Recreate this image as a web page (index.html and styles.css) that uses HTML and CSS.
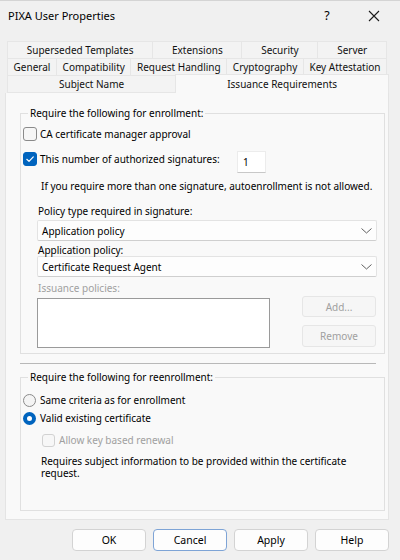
FILE: index.html
```html
<!DOCTYPE html>
<html>
<head>
<meta charset="utf-8">
<title>PIXA User Properties</title>
<link rel="stylesheet" href="styles.css">
</head>
<body>
<div class="window">
  <div class="titlebar">
    <span class="title">PIXA User Properties</span>
    <span class="help">?</span>
    <span class="close"><svg width="12" height="12" viewBox="0 0 12 12"><path d="M1 1L11 11M11 1L1 11" stroke="#1a1a1a" stroke-width="1.1" fill="none"/></svg></span>
  </div>

  <div class="tabs">
    <div class="tabrow">
      <div class="tab">Superseded Templates</div>
      <div class="tab">Extensions</div>
      <div class="tab">Security</div>
      <div class="tab last">Server</div>
    </div>
    <div class="tabrow">
      <div class="tab">General</div>
      <div class="tab">Compatibility</div>
      <div class="tab">Request Handling</div>
      <div class="tab">Cryptography</div>
      <div class="tab last">Key Attestation</div>
    </div>
    <div class="tabrow row3">
      <div class="tab first3">Subject Name</div>
      <div class="tab sel">Issuance Requirements</div>
    </div>
  </div>

  <div class="panel">
    <fieldset class="group g1">
      <legend>Require the following for enrollment:</legend>
      <label class="check cb-row1"><span class="cb"></span><span>CA certificate manager approval</span></label>
      <div class="sigrow">
        <label class="check siglabel"><span class="cb on"><svg width="14" height="14" viewBox="0 0 14 14"><path d="M3.8 7.3L6 9.4L10.3 4.9" stroke="#fff" stroke-width="1.2" fill="none" stroke-linecap="round" stroke-linejoin="round"/></svg></span><span>This number of authorized signatures:</span></label>
        <div class="num">1</div>
      </div>
      <p class="note">If you require more than one signature, autoenrollment is not allowed.</p>
      <div class="policy">
        <div class="lbl lbl1">Policy type required in signature:</div>
        <div class="select">
          <span>Application policy</span>
          <svg width="11" height="6" viewBox="0 0 11 6"><path d="M0.5 0.5L5.5 5L10.5 0.5" stroke="#606060" stroke-width="1" fill="none"/></svg>
        </div>
        <div class="lbl lbl2">Application policy:</div>
        <div class="select">
          <span>Certificate Request Agent</span>
          <svg width="11" height="6" viewBox="0 0 11 6"><path d="M0.5 0.5L5.5 5L10.5 0.5" stroke="#606060" stroke-width="1" fill="none"/></svg>
        </div>
        <div class="lbl lbl3 disabled">Issuance policies:</div>
        <div class="issrow">
          <div class="listbox"></div>
          <div class="btncol">
            <div class="dbtn add">Add...</div>
            <div class="dbtn remove">Remove</div>
          </div>
        </div>
      </div>
    </fieldset>

    <div class="sep"></div>

    <fieldset class="group g2">
      <legend>Require the following for reenrollment:</legend>
      <label class="radio-row r1"><span class="radio"></span><span>Same criteria as for enrollment</span></label>
      <label class="radio-row r2"><span class="radio on"></span><span>Valid existing certificate</span></label>
      <label class="check cb-dis"><span class="cb dis"></span><span class="disabled">Allow key based renewal</span></label>
      <p class="note2">Requires subject information to be provided within the certificate request.</p>
    </fieldset>
  </div>

  <div class="buttons">
    <div class="btn">OK</div>
    <div class="btn focus">Cancel</div>
    <div class="btn">Apply</div>
    <div class="btn">Help</div>
  </div>
</div>
</body>
</html>
```

FILE: styles.css
```css
* { box-sizing: border-box; }

body {
  margin: 0;
  width: 400px;
  height: 560px;
  overflow: hidden;
  background: #f0f0f0;
  font-family: "Noto Sans", "Segoe UI", sans-serif;
  font-size: 10px;
  color: #000;
}

.window {
  height: 560px;
  border-top: 1px solid #d4d4d4;
}

/* title bar */
.titlebar {
  height: 29px;
  display: flex;
  align-items: center;
  padding-left: 8px;
  padding-right: 11px;
}
.title { flex: 1; font-size: 11px; }
.help {
  width: 20px;
  text-align: center;
  font-size: 12.5px;
  margin-right: 22px;
}
.close {
  width: 30px;
  display: flex;
  justify-content: center;
  align-items: center;
}

/* tabs */
.tabs {
  margin-top: 11px;
  margin-left: 7px;
  width: 380px;
}
.tabrow {
  display: flex;
  height: 17px;
}
.tabrow.row3 { height: 18px; }
.tab {
  flex: 1 1 auto;
  display: flex;
  align-items: center;
  justify-content: center;
  white-space: nowrap;
  background: #f3f3f3;
  border-top: 1px solid #e6e6e6;
  border-left: 1px solid #e6e6e6;
  color: #111;
}
.tab.last { border-right: 1px solid #e6e6e6; }
.tab.first3 { border-bottom: 1px solid #e6e6e6; }
.tab.sel {
  background: #f9f9f9;
  margin-top: -1px;
  margin-right: -2px;
  border-right: 1px solid #e6e6e6;
}

/* panel */
.panel {
  margin-left: 5px;
  width: 384px;
  height: 427px;
  background: #f9f9f9;
  border: 1px solid #e4e4e4;
  border-top: none;
  padding: 13px 3px 0 14px;
}

.group {
  margin: 0;
  padding: 0 0 0 2px;
  border: 1px solid #e0e0e0;
  width: 365px;
  min-width: 0;
}
.group legend {
  padding: 0 2px;
  margin-left: 5px;
  line-height: 14px;
}
.g1 { padding-bottom: 5px; }
.g2 { margin-top: 6px; padding-bottom: 31px; }

.check {
  display: flex;
  align-items: center;
  gap: 3px;
}
.cb-row1 { height: 28px; }
.cb {
  width: 14px;
  height: 14px;
  border: 1px solid #8a8a8a;
  border-radius: 3px;
  background: #f6f6f6;
  flex: none;
  display: flex;
}
.cb.on {
  background: #0064be;
  border-color: #0064be;
}
.cb.on svg { margin: -1px; }
.cb.dis {
  width: 13px;
  height: 13px;
  border-color: #d2d2d2;
  background: #f7f7f7;
}

.sigrow {
  display: flex;
  align-items: flex-start;
}
.siglabel {
  height: 22px;
  width: 214px;
}
.num {
  margin-top: 3px;
  width: 29px;
  height: 22px;
  background: #fff;
  border: 1px solid #ececec;
  border-bottom-color: #c8c8c8;
  padding-left: 5px;
  display: flex;
  align-items: center;
}

.note {
  margin: 6px 0 0 18px;
  line-height: 14px;
}

.policy { margin-left: 14px; }
.lbl { margin-left: 1px; }
.lbl1 { margin-top: 12px; line-height: 12px; }
.lbl2 { margin-top: 4px; line-height: 11px; }
.lbl3 { margin-top: 5px; line-height: 12px; }
.disabled { color: #a0a0a0; }

.select {
  margin-top: 3px;
  width: 340px;
  height: 21px;
  background: #fdfdfd;
  border: 1px solid #e3e3e3;
  border-bottom-color: #cfcfcf;
  border-radius: 2px;
  display: flex;
  align-items: center;
  justify-content: space-between;
  padding: 0 4px 0 4px;
}
.lbl2 + .select { margin-top: 0; }

.issrow {
  margin-top: 2px;
  display: flex;
  align-items: flex-start;
}
.listbox {
  margin-top: 2px;
  width: 233px;
  height: 50px;
  background: #fff;
  border: 1px solid #9a9a9a;
}
.btncol {
  margin-left: 32px;
  width: 74px;
  display: flex;
  flex-direction: column;
  gap: 8px;
}
.dbtn {
  background: #f6f6f6;
  border: 1px solid #e6e6e6;
  border-radius: 3px;
  color: #a0a0a0;
  display: flex;
  align-items: center;
  justify-content: center;
}
.dbtn.add { height: 21px; }
.dbtn.remove { height: 22px; }

.sep {
  margin-top: 9px;
  width: 356px;
  height: 1px;
  background: #b8b8b8;
}

.radio-row {
  display: flex;
  align-items: center;
  gap: 4px;
  height: 16px;
}
.radio-row.r1 { margin-top: 8px; }
.radio-row.r2 { margin-top: 2px; }
.radio {
  width: 13px;
  height: 13px;
  border-radius: 50%;
  border: 1px solid #8a8a8a;
  background: #f4f4f4;
  flex: none;
}
.radio.on {
  border: 4px solid #0064be;
  background: #fff;
}
.cb-dis {
  margin-top: 6px;
  height: 16px;
  margin-left: 19px;
  gap: 4px;
}
.note2 {
  margin: 7px 0 0 18px;
  width: 320px;
  line-height: 12px;
}

/* bottom buttons */
.buttons {
  margin-top: 9px;
  display: flex;
  justify-content: flex-end;
  gap: 7px;
  padding-right: 11px;
}
.btn {
  width: 74px;
  height: 22px;
  background: #fdfdfd;
  border: 1px solid #d3d3d3;
  border-radius: 4px;
  display: flex;
  align-items: center;
  justify-content: center;
  font-size: 10.5px;
}
.btn.focus { border-color: #7ea4d6; }
```
